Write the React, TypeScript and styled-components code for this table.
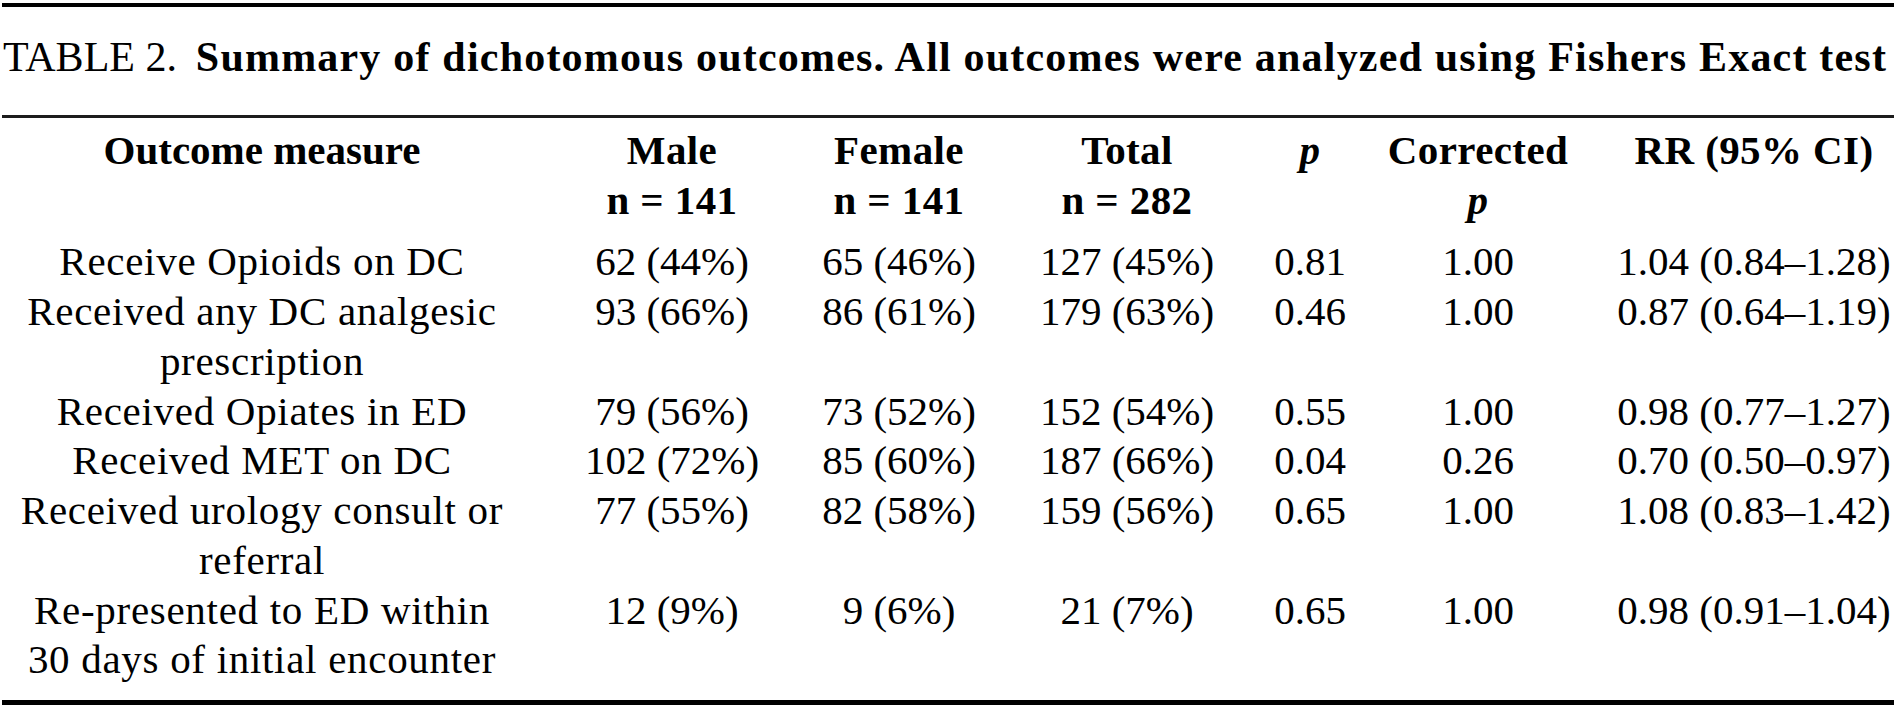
import styled, { createGlobalStyle } from "styled-components";

const GlobalStyle = createGlobalStyle`
  html, body {
    margin: 0;
    padding: 0;
    background: #fff;
  }
  body {
    font-family: "Liberation Serif", "Times New Roman", serif;
    color: #000;
  }
`;

const Page = styled.div`
  padding: 3px 2px 0;
`;

const Sheet = styled.section`
  border-top: 4px solid #000;
  border-bottom: 5px solid #000;
`;

const Caption = styled.div`
  margin: 26px 0 32px;
  padding-left: 1px;
  font-size: 42px;
  line-height: 49.75px;
  white-space: nowrap;

  & span {
    margin-right: 0.45em;
  }

  & b {
    letter-spacing: 1.2px;
  }
`;

const Head = styled.div`
  border-top: 3px solid #1c1c1c;
  padding: 8.5px 0 11.5px;
  font-weight: bold;
`;

const Body = styled.div`
  padding-bottom: 14.8px;
`;

const Row = styled.div`
  display: grid;
  grid-template-columns: 520px 300px 154px 302px 64px 272px 280px;
  font-size: 41px;
  line-height: 49.75px;
`;

const Cell = styled.div<{ $label?: boolean }>`
  display: flex;
  justify-content: center;
  text-align: center;
  white-space: ${(p) => (p.$label ? "normal" : "nowrap")};
  padding: ${(p) => (p.$label ? "0 12px" : "0")};
  letter-spacing: ${(p) => (p.$label ? "0.7px" : "0")};
`;

const HeadCell = styled(Cell)`
  letter-spacing: ${(p) => (p.$label ? "0" : "0.4px")};
`;

const P = styled.i`
  font-weight: bold;
`;

interface Outcome {
  name: string;
  male: string;
  female: string;
  total: string;
  p: string;
  corrected: string;
  rr: string;
}

const rows: Outcome[] = [
  { name: "Receive Opioids on DC", male: "62 (44%)", female: "65 (46%)", total: "127 (45%)", p: "0.81", corrected: "1.00", rr: "1.04 (0.84–1.28)" },
  { name: "Received any DC analgesic prescription", male: "93 (66%)", female: "86 (61%)", total: "179 (63%)", p: "0.46", corrected: "1.00", rr: "0.87 (0.64–1.19)" },
  { name: "Received Opiates in ED", male: "79 (56%)", female: "73 (52%)", total: "152 (54%)", p: "0.55", corrected: "1.00", rr: "0.98 (0.77–1.27)" },
  { name: "Received MET on DC", male: "102 (72%)", female: "85 (60%)", total: "187 (66%)", p: "0.04", corrected: "0.26", rr: "0.70 (0.50–0.97)" },
  { name: "Received urology consult or referral", male: "77 (55%)", female: "82 (58%)", total: "159 (56%)", p: "0.65", corrected: "1.00", rr: "1.08 (0.83–1.42)" },
  { name: "Re-presented to ED within 30 days of initial encounter", male: "12 (9%)", female: "9 (6%)", total: "21 (7%)", p: "0.65", corrected: "1.00", rr: "0.98 (0.91–1.04)" },
];

const App = () => {
  return (
    <>
      <GlobalStyle />
      <Page>
        <Sheet>
          <Caption>
            <span>TABLE 2.</span>
            <b>Summary of dichotomous outcomes. All outcomes were analyzed using Fishers Exact test</b>
          </Caption>
          <Head>
            <Row>
              <HeadCell $label>Outcome measure</HeadCell>
              <HeadCell>Male</HeadCell>
              <HeadCell>Female</HeadCell>
              <HeadCell>Total</HeadCell>
              <HeadCell>
                <P>p</P>
              </HeadCell>
              <HeadCell>Corrected</HeadCell>
              <HeadCell>RR (95% CI)</HeadCell>
            </Row>
            <Row>
              <HeadCell $label />
              <HeadCell>n = 141</HeadCell>
              <HeadCell>n = 141</HeadCell>
              <HeadCell>n = 282</HeadCell>
              <HeadCell />
              <HeadCell>
                <P>p</P>
              </HeadCell>
              <HeadCell />
            </Row>
          </Head>
          <Body>
            {rows.map((r) => (
              <Row key={r.name}>
                <Cell $label>{r.name}</Cell>
                <Cell>{r.male}</Cell>
                <Cell>{r.female}</Cell>
                <Cell>{r.total}</Cell>
                <Cell>{r.p}</Cell>
                <Cell>{r.corrected}</Cell>
                <Cell>{r.rr}</Cell>
              </Row>
            ))}
          </Body>
        </Sheet>
      </Page>
    </>
  );
};

export default App;
